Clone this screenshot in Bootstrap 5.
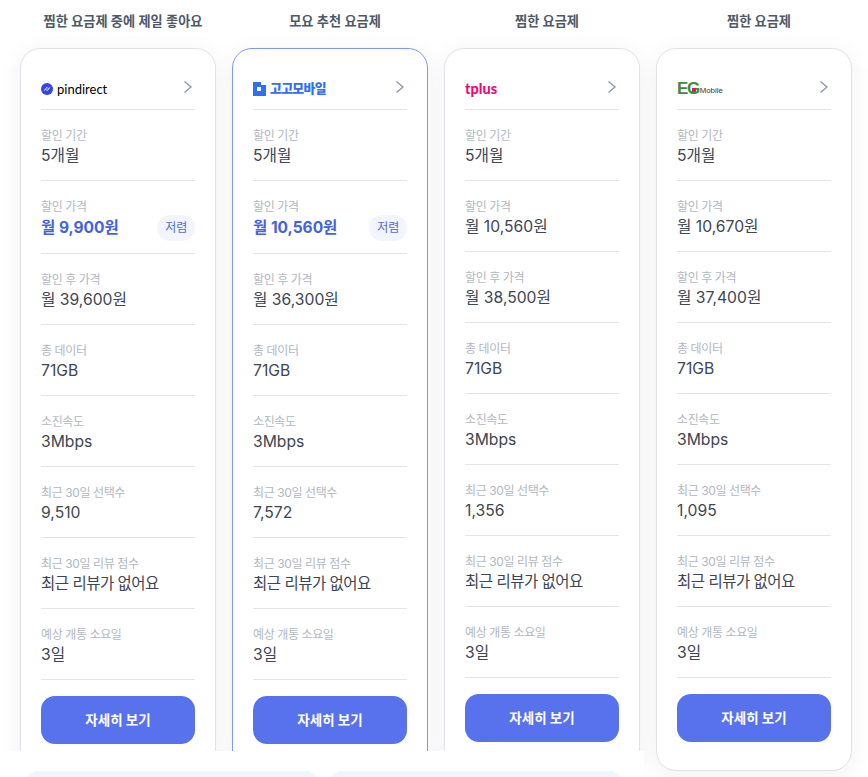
<!DOCTYPE html>
<html lang="ko">
<head>
<meta charset="utf-8">
<title>요금제 비교</title>
<link href="https://cdn.jsdelivr.net/npm/bootstrap@5.3.0/dist/css/bootstrap.min.css" rel="stylesheet">
<style>
html,body{height:777px;overflow:hidden;background:#fff}
body{position:relative;font-family:Inter,"Noto Sans CJK KR",sans-serif;color:#333d4b}
.plans{gap:16px;padding:0 16px 0 20px}
.plan-col{width:196px;flex:none}
.plan-title{height:48px;padding:11px 0 0 10px;font-size:13.2px;line-height:20px;font-weight:600;color:#4e5968;text-align:center;white-space:nowrap}
.plan-card{background:#fff;border:1px solid #dfe2e9;border-radius:20px;padding:0 20px 28px;box-shadow:0 4px 24px rgba(0,0,0,.06)}
.plan-card.best{border-color:#7f97ff}
.plan-head{height:61px;border-bottom:1px solid #e1e4e9;padding-top:30px}
.plan-head svg.chev{margin-right:2px;flex:none}
.logo-box{height:20px;white-space:nowrap;position:relative}
.logo-pin{font-family:Lato,sans-serif;font-size:13px;color:#000;line-height:20px}
.logo-gogo{font-size:12.8px;font-weight:800;color:#2f6dfb;line-height:20px;letter-spacing:-.6px}
.logo-tplus{font-family:Lato,sans-serif;font-size:14.5px;font-weight:900;color:#ee0a76;line-height:20px}
.logo-eg{font-family:"Liberation Sans",sans-serif;font-size:17px;font-weight:700;color:#3f8a45;line-height:20px;letter-spacing:-1.4px}
.logo-mob{font-family:"Liberation Sans",sans-serif;font-size:7.8px;line-height:16px;color:#333;margin-left:1px}
.eg-dot{position:absolute;left:15px;top:9px;width:4px;height:4px;background:#d6204f}
.info-row{padding:17px 0 13px;border-bottom:1px solid #e1e4e9}
.info-row.price-row{padding-bottom:12px}
.info-label{font-size:12px;line-height:18px;color:#b0b8c1;white-space:nowrap;letter-spacing:-.4px}
.info-value{font-size:15.7px;line-height:22px;color:#3d4652;white-space:nowrap}
.info-value.hangul{font-size:15.5px;letter-spacing:-.5px}
.price-line{height:26px;margin-top:-1px}
.price-line .info-value{font-size:15.5px;font-weight:700;color:#4263dd;line-height:26px}
.cheap-tag{font-size:12px;line-height:26px;height:26px;padding:0 8px;background:#f2f5ff;color:#4f6bd0;border-radius:13px;white-space:nowrap;letter-spacing:-.2px}
.detail-btn{margin-top:16px;height:48px;font-size:13.5px;font-weight:700;line-height:48px;padding:0;background:#5872ee;border:0;border-radius:14px;color:#fff}
.cover{position:absolute;left:0;top:751px;width:644px;height:26px;background:#fff;padding:20px 22px 0 26px;gap:12px}
.pale-box{flex:1;height:40px;background:#f2f5ff;border-radius:12px}
</style>
</head>
<body>
<div class="plans d-flex align-items-start">

  <div class="plan-col">
    <div class="plan-title">찜한 요금제 중에 제일 좋아요</div>
    <div class="plan-card">
      <div class="plan-head d-flex justify-content-between align-items-start">
        <div class="logo-box d-flex align-items-center gap-1">
          <svg width="12" height="12" viewBox="0 0 12 12"><circle cx="6" cy="6" r="6" fill="#3347e8"/><path d="M3.4 7.6 5 5.2c.6-.8 1.5-.7 1.7 0M8.6 4.4 7 6.8c-.6.8-1.5.7-1.7 0" fill="none" stroke="#fff" stroke-width="1"/></svg>
          <span class="logo-pin">pindirect</span>
        </div>
        <svg class="chev" width="10" height="16" viewBox="0 0 10 16"><path d="M1.5 2.5 8 8l-6.5 5.5" fill="none" stroke="#8b95a1" stroke-width="1.3"/></svg>
      </div>
      <div class="info-row"><div class="info-label">할인 기간</div><div class="info-value">5개월</div></div>
      <div class="info-row price-row"><div class="info-label">할인 가격</div><div class="price-line d-flex justify-content-between align-items-center"><div class="info-value">월 9,900원</div><span class="cheap-tag">저렴</span></div></div>
      <div class="info-row"><div class="info-label">할인 후 가격</div><div class="info-value">월 39,600원</div></div>
      <div class="info-row"><div class="info-label">총 데이터</div><div class="info-value">71GB</div></div>
      <div class="info-row"><div class="info-label">소진속도</div><div class="info-value">3Mbps</div></div>
      <div class="info-row"><div class="info-label">최근 30일 선택수</div><div class="info-value">9,510</div></div>
      <div class="info-row"><div class="info-label">최근 30일 리뷰 점수</div><div class="info-value hangul">최근 리뷰가 없어요</div></div>
      <div class="info-row"><div class="info-label">예상 개통 소요일</div><div class="info-value">3일</div></div>
      <button type="button" class="btn detail-btn w-100">자세히 보기</button>
    </div>
  </div>

  <div class="plan-col">
    <div class="plan-title">모요 추천 요금제</div>
    <div class="plan-card best">
      <div class="plan-head d-flex justify-content-between align-items-start">
        <div class="logo-box d-flex align-items-center gap-1">
          <svg width="13" height="14" viewBox="0 0 13 14"><path d="M0 0h8v3h5v11H0z" fill="#2f6dfb"/><rect x="4" y="5" width="4" height="4" fill="#fff"/></svg>
          <span class="logo-gogo">고고모바일</span>
        </div>
        <svg class="chev" width="10" height="16" viewBox="0 0 10 16"><path d="M1.5 2.5 8 8l-6.5 5.5" fill="none" stroke="#8b95a1" stroke-width="1.3"/></svg>
      </div>
      <div class="info-row"><div class="info-label">할인 기간</div><div class="info-value">5개월</div></div>
      <div class="info-row price-row"><div class="info-label">할인 가격</div><div class="price-line d-flex justify-content-between align-items-center"><div class="info-value">월 10,560원</div><span class="cheap-tag">저렴</span></div></div>
      <div class="info-row"><div class="info-label">할인 후 가격</div><div class="info-value">월 36,300원</div></div>
      <div class="info-row"><div class="info-label">총 데이터</div><div class="info-value">71GB</div></div>
      <div class="info-row"><div class="info-label">소진속도</div><div class="info-value">3Mbps</div></div>
      <div class="info-row"><div class="info-label">최근 30일 선택수</div><div class="info-value">7,572</div></div>
      <div class="info-row"><div class="info-label">최근 30일 리뷰 점수</div><div class="info-value hangul">최근 리뷰가 없어요</div></div>
      <div class="info-row"><div class="info-label">예상 개통 소요일</div><div class="info-value">3일</div></div>
      <button type="button" class="btn detail-btn w-100">자세히 보기</button>
    </div>
  </div>

  <div class="plan-col">
    <div class="plan-title">찜한 요금제</div>
    <div class="plan-card">
      <div class="plan-head d-flex justify-content-between align-items-start">
        <div class="logo-box d-flex align-items-center"><span class="logo-tplus">tplus</span></div>
        <svg class="chev" width="10" height="16" viewBox="0 0 10 16"><path d="M1.5 2.5 8 8l-6.5 5.5" fill="none" stroke="#8b95a1" stroke-width="1.3"/></svg>
      </div>
      <div class="info-row"><div class="info-label">할인 기간</div><div class="info-value">5개월</div></div>
      <div class="info-row"><div class="info-label">할인 가격</div><div class="info-value">월 10,560원</div></div>
      <div class="info-row"><div class="info-label">할인 후 가격</div><div class="info-value">월 38,500원</div></div>
      <div class="info-row"><div class="info-label">총 데이터</div><div class="info-value">71GB</div></div>
      <div class="info-row"><div class="info-label">소진속도</div><div class="info-value">3Mbps</div></div>
      <div class="info-row"><div class="info-label">최근 30일 선택수</div><div class="info-value">1,356</div></div>
      <div class="info-row"><div class="info-label">최근 30일 리뷰 점수</div><div class="info-value hangul">최근 리뷰가 없어요</div></div>
      <div class="info-row"><div class="info-label">예상 개통 소요일</div><div class="info-value">3일</div></div>
      <button type="button" class="btn detail-btn w-100">자세히 보기</button>
    </div>
  </div>

  <div class="plan-col">
    <div class="plan-title">찜한 요금제</div>
    <div class="plan-card">
      <div class="plan-head d-flex justify-content-between align-items-start">
        <div class="logo-box d-flex align-items-end"><span class="logo-eg">EG</span><span class="logo-mob">Mobile</span><span class="eg-dot"></span></div>
        <svg class="chev" width="10" height="16" viewBox="0 0 10 16"><path d="M1.5 2.5 8 8l-6.5 5.5" fill="none" stroke="#8b95a1" stroke-width="1.3"/></svg>
      </div>
      <div class="info-row"><div class="info-label">할인 기간</div><div class="info-value">5개월</div></div>
      <div class="info-row"><div class="info-label">할인 가격</div><div class="info-value">월 10,670원</div></div>
      <div class="info-row"><div class="info-label">할인 후 가격</div><div class="info-value">월 37,400원</div></div>
      <div class="info-row"><div class="info-label">총 데이터</div><div class="info-value">71GB</div></div>
      <div class="info-row"><div class="info-label">소진속도</div><div class="info-value">3Mbps</div></div>
      <div class="info-row"><div class="info-label">최근 30일 선택수</div><div class="info-value">1,095</div></div>
      <div class="info-row"><div class="info-label">최근 30일 리뷰 점수</div><div class="info-value hangul">최근 리뷰가 없어요</div></div>
      <div class="info-row"><div class="info-label">예상 개통 소요일</div><div class="info-value">3일</div></div>
      <button type="button" class="btn detail-btn w-100">자세히 보기</button>
    </div>
  </div>

</div>
<div class="cover d-flex">
  <div class="pale-box"></div>
  <div class="pale-box"></div>
</div>
<script src="https://cdn.jsdelivr.net/npm/bootstrap@5.3.0/dist/js/bootstrap.bundle.min.js"></script>
</body>
</html>
